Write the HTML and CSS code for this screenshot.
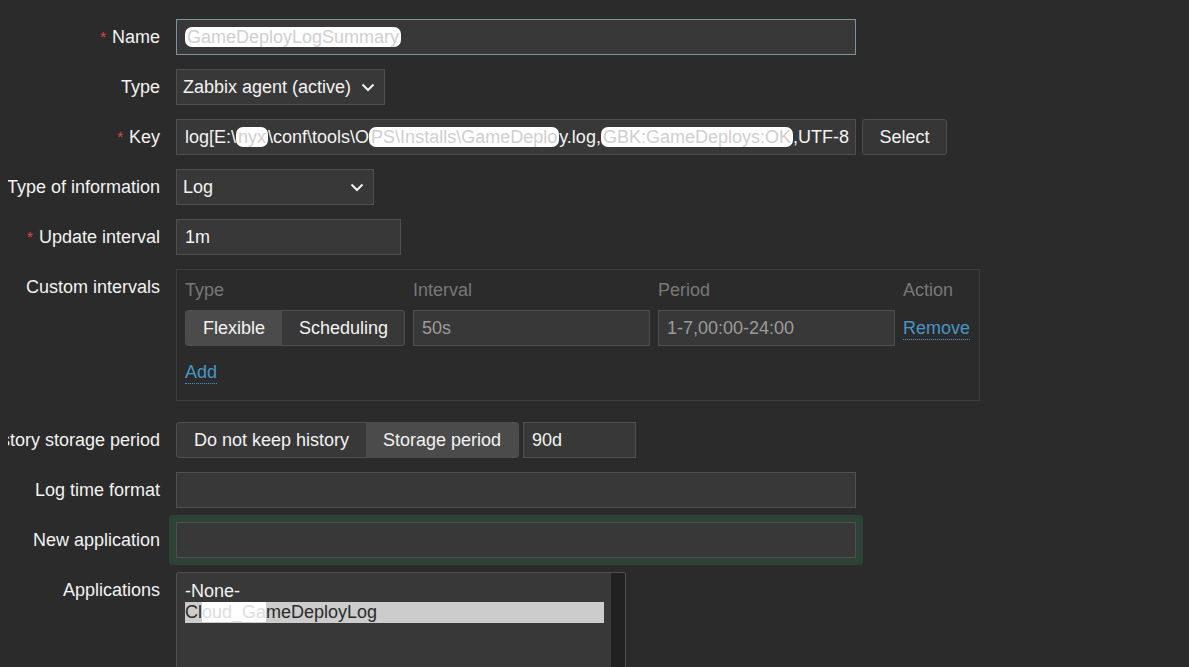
FILE: index.html
```html
<!DOCTYPE html>
<html lang="en">
<head>
    <meta charset="UTF-8">
    <meta name="viewport" content="width=device-width, initial-scale=1.0">
    <title>Item</title>
    <link rel="stylesheet" href="styles.css">
</head>
<body>
    <form class="form-list">
        <div class="row">
            <label class="label"><span class="req">*</span>Name</label>
            <div class="textbox focused w-wide"><span class="redact">GameDeployLogSummary</span></div>
        </div>

        <div class="row">
            <label class="label">Type</label>
            <div class="select w-type">
                <span>Zabbix agent (active)</span>
                <svg class="chev" width="14" height="9" viewBox="0 0 14 9"><polyline points="1.5,1.5 7,7 12.5,1.5" /></svg>
            </div>
        </div>

        <div class="row">
            <label class="label"><span class="req">*</span>Key</label>
            <div class="textbox w-wide key">log[E:\<span class="redact">nyx</span>\conf\tools\O<span class="redact">PS\Installs\GameDeplo</span>y.log,<span class="redact">GBK:GameDeploys:OK</span>,UTF-8</div>
            <button type="button" class="btn">Select</button>
        </div>

        <div class="row">
            <label class="label">Type of information</label>
            <div class="select w-info">
                <span>Log</span>
                <svg class="chev" width="14" height="9" viewBox="0 0 14 9"><polyline points="1.5,1.5 7,7 12.5,1.5" /></svg>
            </div>
        </div>

        <div class="row">
            <label class="label"><span class="req">*</span>Update interval</label>
            <div class="textbox w-interval">1m</div>
        </div>

        <div class="row row-intervals">
            <label class="label">Custom intervals</label>
            <div class="intervals">
                <div class="iv-grid">
                    <div class="iv-head">Type</div>
                    <div class="iv-head">Interval</div>
                    <div class="iv-head">Period</div>
                    <div class="iv-head">Action</div>

                    <div class="segmented">
                        <span class="seg active">Flexible</span>
                        <span class="seg">Scheduling</span>
                    </div>
                    <div class="textbox dim">50s</div>
                    <div class="textbox dim">1-7,00:00-24:00</div>
                    <div class="iv-action"><a href="#" class="link">Remove</a></div>
                </div>
                <div class="iv-add"><a href="#" class="link">Add</a></div>
            </div>
        </div>

        <div class="row">
            <label class="label">History storage period</label>
            <div class="segmented">
                <span class="seg seg-hist">Do not keep history</span>
                <span class="seg active seg-store">Storage period</span>
            </div>
            <div class="textbox w-days">90d</div>
        </div>

        <div class="row">
            <label class="label">Log time format</label>
            <div class="textbox w-wide"></div>
        </div>

        <div class="row">
            <label class="label">New application</label>
            <div class="textbox w-wide glow"></div>
        </div>

        <div class="row">
            <label class="label">Applications</label>
            <div class="listbox">
                <div class="options">
                    <div class="option">-None-</div>
                    <div class="option selected">Cl<span class="redact-sel">oud_Ga</span>meDeployLog</div>
                </div>
                <div class="scrolltrack"></div>
            </div>
        </div>
    </form>
</body>
</html>
```

FILE: styles.css
```css
body {
    margin: 8px;
    background-color: #2b2b2b;
    color: #f2f2f2;
    font-family: "Liberation Sans", Arial, sans-serif;
    font-size: 18px;
    overflow: hidden;
}
.form-list {
    display: flex;
    flex-direction: column;
    gap: 14px;
    padding-top: 11px;
}
.row {
    display: flex;
    align-items: flex-start;
    gap: 6px;
}
.label {
    flex: 0 0 152px;
    min-width: 0;
    margin-right: 10px;
    display: flex;
    justify-content: flex-end;
    height: 36px;
    line-height: 36px;
    white-space: nowrap;
}
.req {
    color: #e0484f;
    font-size: 15px;
    margin-right: 6px;
}
.textbox {
    box-sizing: border-box;
    height: 36px;
    line-height: 34px;
    padding: 0 8px;
    background: #383838;
    border: 1px solid #4f4f4f;
    white-space: nowrap;
    overflow: hidden;
}
.textbox.focused {
    border-color: #7895a0;
}
.textbox.dim {
    color: #9b9b9b;
}
.w-wide { width: 680px; }
.w-interval { width: 225px; }
.w-days { width: 113px; margin-left: -2px; }
.redact {
    background: #fff;
    color: #cfcfcf;
    border-radius: 7px;
    padding: 0 2px;
}
.select {
    box-sizing: border-box;
    height: 36px;
    display: flex;
    align-items: center;
    justify-content: space-between;
    padding: 0 9px 0 6px;
    background: #383838;
    border: 1px solid #4f4f4f;
    white-space: nowrap;
}
.w-type { width: 209px; }
.w-info { width: 198px; }
.chev polyline {
    fill: none;
    stroke: #f2f2f2;
    stroke-width: 2;
}
.btn {
    box-sizing: border-box;
    height: 36px;
    width: 85px;
    background: #363636;
    border: 1px solid #4f4f4f;
    border-radius: 3px;
    color: #f2f2f2;
    font-family: inherit;
    font-size: 18px;
}
.row-intervals {
    margin-bottom: 7px;
}
.intervals {
    box-sizing: border-box;
    width: 804px;
    height: 132px;
    border: 1px solid #3d3d3d;
    padding: 8px 8px 0 8px;
}
.iv-grid {
    display: grid;
    grid-template-columns: 220px 237px 237px auto;
    column-gap: 8px;
    row-gap: 8px;
}
.iv-head {
    color: #787878;
    line-height: 24px;
}
.iv-action {
    line-height: 36px;
}
.iv-add {
    margin-top: 14px;
    line-height: 24px;
}
.link {
    color: #4796c4;
    text-decoration: none;
    border-bottom: 1px dotted #4796c4;
    padding-bottom: 1px;
}
.segmented {
    box-sizing: border-box;
    display: flex;
    height: 36px;
    border: 1px solid #4f4f4f;
    border-radius: 3px;
    overflow: hidden;
    background: #383838;
}
.seg {
    display: flex;
    align-items: center;
    justify-content: center;
    padding: 0 17px;
    white-space: nowrap;
}
.seg.active {
    background: #4b4b4b;
}
.seg-hist { width: 189px; box-sizing: border-box; }
.seg-store { width: 152px; box-sizing: border-box; }
.glow {
    box-shadow: 0 0 0 7px #2f4236;
    border-radius: 1px;
}
.listbox {
    box-sizing: border-box;
    width: 450px;
    height: 120px;
    display: flex;
    background: #383838;
    border: 1px solid #4f4f4f;
    border-radius: 2px;
}
.options {
    flex: 1;
    padding: 8px 7px 0 8px;
}
.option {
    line-height: 21px;
    white-space: nowrap;
}
.option.selected {
    background: #cccccc;
    color: #2b2b2b;
}
.redact-sel {
    background: #fff;
    color: #ddd;
}
.scrolltrack {
    width: 14px;
    background: #212121;
}
```
